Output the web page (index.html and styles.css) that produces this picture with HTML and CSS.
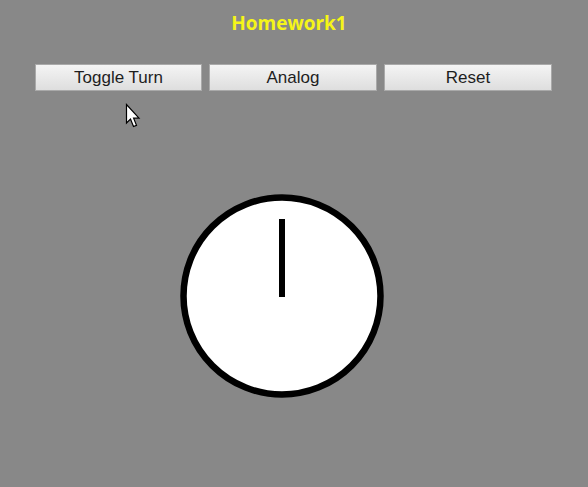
FILE: index.html
```html
<!DOCTYPE html>
<html>
<head>
<meta charset="utf-8">
<link rel="stylesheet" href="styles.css">
</head>
<body>
<h1 class="title">Homework1</h1>
<div class="controls">
  <button class="btn btn-a">Toggle Turn</button>
  <button class="btn btn-b">Analog</button>
  <button class="btn btn-b">Reset</button>
</div>
<div class="clock-wrap">
  <svg class="clock" width="210" height="210" viewBox="0 0 210 210">
    <circle cx="105" cy="105" r="98.5" fill="#fff" stroke="#000" stroke-width="6.5"/>
    <rect x="102" y="28" width="6" height="78" fill="#000"/>
  </svg>
</div>
<svg class="cursor" width="16" height="26" viewBox="0 0 16 26">
  <path d="M1.5 1.5 L1.5 20 L5.5 16 L8.5 23.5 L11.5 22.3 L8.6 15.2 L14 15.2 Z" fill="#fff" stroke="#000" stroke-width="1.2" stroke-linejoin="miter"/>
</svg>
</body>
</html>
```
FILE: styles.css
```css
html, body {
  margin: 0;
  padding: 0;
  background: #888888;
  height: 100%;
}
body {
  position: relative;
  font-family: "Liberation Sans", Arial, sans-serif;
}
.title {
  margin: 0;
  padding-top: 10px;
  padding-right: 10px;
  height: 26px;
  line-height: 26px;
  text-align: center;
  font-family: "Open Sans", "Noto Sans", sans-serif;
  font-weight: 700;
  font-size: 19px;
  color: #f5f518;
}
.controls {
  display: flex;
  gap: 7px;
  padding-left: 35px;
  margin-top: 28px;
}
.btn {
  box-sizing: border-box;
  height: 27px;
  border: 1px solid #a9a9a9;
  background: linear-gradient(#f4f4f4, #dedede);
  font-family: "Liberation Sans", Arial, sans-serif;
  font-size: 17px;
  color: #1e1e1e;
  padding: 0;
  margin: 0;
  border-radius: 0;
}
.btn-a { width: 167px; }
.btn-b { width: 168px; }
.clock-wrap {
  display: flex;
  padding-left: 177px;
  margin-top: 100px;
}
.clock {
  display: block;
}
.cursor {
  position: absolute;
  left: 125px;
  top: 103px;
}
```
